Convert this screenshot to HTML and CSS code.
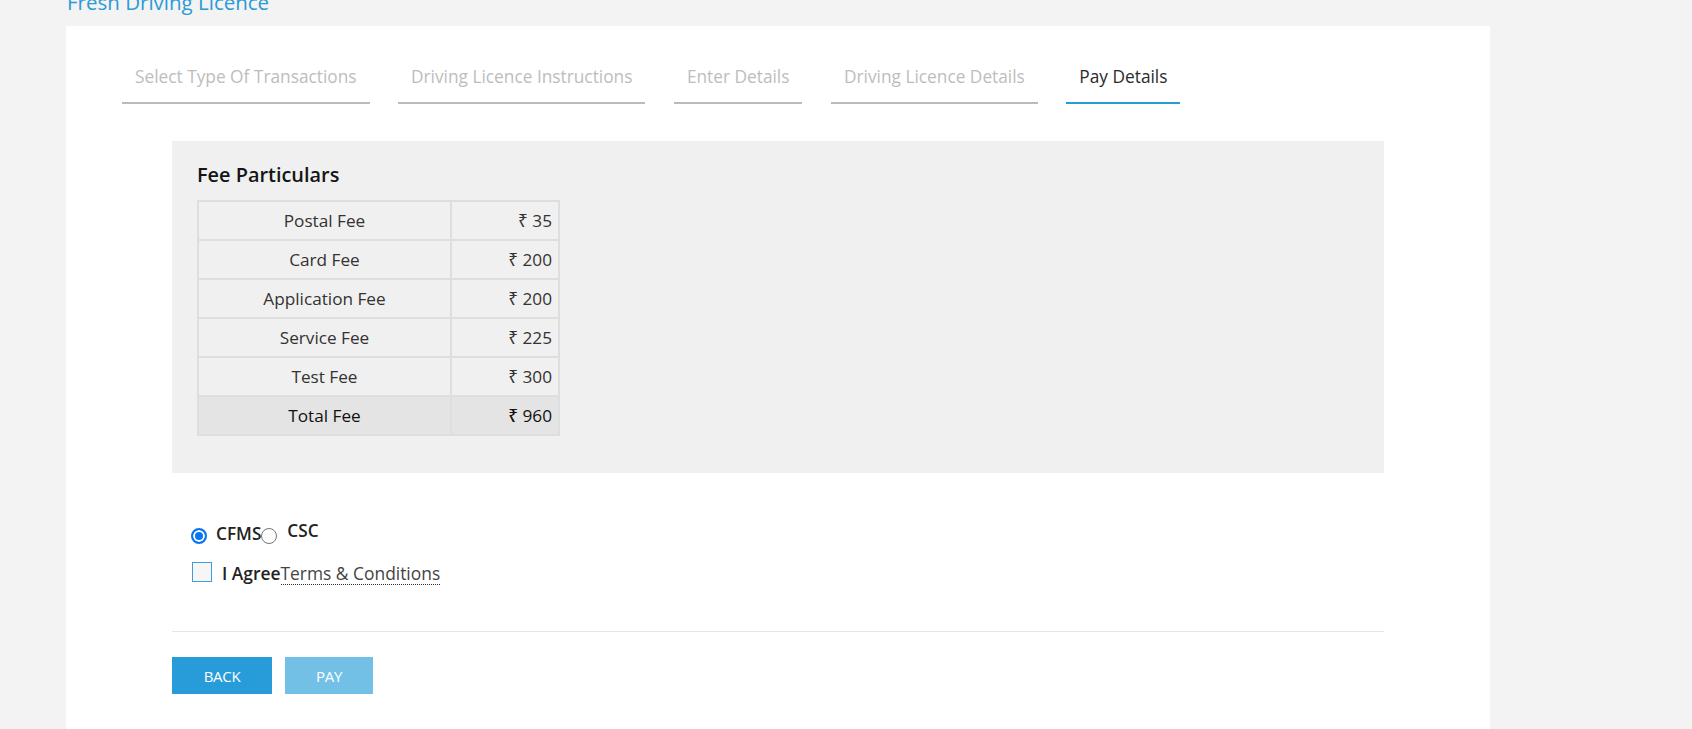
FILE: index.html
```html
<!DOCTYPE html>
<html lang="en">
<head>
<meta charset="utf-8">
<title>Fresh Driving Licence - Pay Details</title>
<link rel="stylesheet" href="styles.css">
</head>
<body>
<div class="page">
  <h2 class="title">Fresh Driving Licence</h2>
  <div class="card">
    <ul class="tabs">
      <li class="tab">Select Type Of Transactions</li>
      <li class="tab">Driving Licence Instructions</li>
      <li class="tab">Enter Details</li>
      <li class="tab">Driving Licence Details</li>
      <li class="tab active">Pay Details</li>
    </ul>

    <div class="fee-box">
      <h3 class="fee-title">Fee Particulars</h3>
      <table class="fee-table">
        <colgroup><col class="c1"><col class="c2"></colgroup>
        <tbody>
          <tr><td class="name">Postal Fee</td><td class="amt">₹ 35</td></tr>
          <tr><td class="name">Card Fee</td><td class="amt">₹ 200</td></tr>
          <tr><td class="name">Application Fee</td><td class="amt">₹ 200</td></tr>
          <tr><td class="name">Service Fee</td><td class="amt">₹ 225</td></tr>
          <tr><td class="name">Test Fee</td><td class="amt">₹ 300</td></tr>
          <tr class="total"><td class="name">Total Fee</td><td class="amt">₹ 960</td></tr>
        </tbody>
      </table>
    </div>

    <div class="options">
      <div class="radio-row">
        <span class="radio checked"></span>
        <span class="opt-label">CFMS</span>
        <span class="radio"></span>
        <span class="opt-label raised">CSC</span>
      </div>
      <div class="agree-row">
        <span class="checkbox"></span>
        <span class="agree">I Agree</span><span class="terms">Terms &amp; Conditions</span>
      </div>
    </div>

    <div class="divider"></div>

    <div class="actions">
      <button class="btn btn-back">BACK</button>
      <button class="btn btn-pay">PAY</button>
    </div>
  </div>
</div>
</body>
</html>
```

FILE: styles.css
```css
html, body {
  margin: 0;
  padding: 0;
  background: #f3f3f3;
  font-family: "Open Sans", "Noto Sans", sans-serif;
  color: #333;
  overflow: hidden;
}

.page {
  padding-left: 66px;
}

.title {
  margin: -11px 0 10px 1px;
  font-size: 20.5px;
  line-height: 27px;
  font-weight: 400;
  color: #2b9ad7;
}

.card {
  width: 1424px;
  min-height: 760px;
  background: #fff;
  padding-top: 39px;
  box-sizing: border-box;
}

.tabs {
  list-style: none;
  display: flex;
  gap: 28.5px;
  margin: 0 0 0 56px;
  padding: 0;
}

.tab {
  font-size: 17.3px;
  font-weight: 400;
  line-height: 24px;
  padding: 0 13px 13px;
  color: #bdbdbd;
  border-bottom: 2px solid #bbbbbb;
  white-space: nowrap;
}

.tab.active {
  color: #2a2a2a;
  border-bottom-color: #279cd9;
}

.fee-box {
  margin: 37px 106px 0;
  background: #f0f0f0;
  padding: 21px 25px 37px;
}

.fee-title {
  margin: 0 0 12px;
  font-size: 19.9px;
  line-height: 26px;
  font-weight: 600;
  color: #151515;
}

.fee-table {
  border-collapse: collapse;
  table-layout: fixed;
  width: 361px;
  font-size: 17.2px;
}

.fee-table col.c1 { width: 253px; }
.fee-table col.c2 { width: 108px; }

.fee-table td {
  border: 2px solid #dedede;
  height: 37px;
  padding: 0;
  line-height: 24px;
  color: #333;
}

.fee-table td.name {
  text-align: center;
}

.fee-table td.amt {
  text-align: right;
  padding-right: 6px;
}

.fee-table tr.total td {
  background: #e4e4e4;
  font-weight: 500;
  color: #111;
}

.options {
  margin: 49px 0 0 125px;
}

.radio-row {
  display: flex;
  align-items: center;
  height: 24px;
  font-size: 17.2px;
  line-height: 24px;
}

.radio {
  width: 14px;
  height: 14px;
  border: 1px solid #767676;
  border-radius: 50%;
  background: #fff;
  margin-top: 4px;
}

.radio.checked {
  width: 12px;
  height: 12px;
  border: 2px solid #0b74ef;
  background: #0b74ef;
  box-shadow: inset 0 0 0 2px #fff;
}

.opt-label {
  font-weight: 600;
  color: #222;
  margin-left: 9px;
}

.opt-label.raised {
  margin-left: 10px;
  padding-bottom: 6px;
}

.agree-row {
  display: flex;
  align-items: center;
  margin-top: 15px;
  height: 24px;
  font-size: 17.4px;
  line-height: 24px;
}

.checkbox {
  width: 18px;
  height: 18px;
  border: 1.5px solid #3d9fdb;
  background: #f6f6f6;
  margin-left: 1px;
  margin-top: -2px;
}

.agree {
  margin-left: 10px;
  font-weight: 600;
  color: #222;
}

.terms {
  color: #444;
  border-bottom: 1px dotted #333;
  line-height: 22px;
}

.divider {
  margin: 46px 106px 0;
  height: 1px;
  background: #e6e6e6;
}

.actions {
  display: flex;
  gap: 13px;
  margin: 25px 106px 0;
}

.btn {
  height: 37px;
  border: none;
  border-radius: 0;
  color: #fff;
  font-family: "Open Sans", "Noto Sans", sans-serif;
  font-size: 15px;
  letter-spacing: -0.3px;
  padding: 0;
  cursor: pointer;
}

.btn-back {
  width: 100px;
  background: #279cd9;
}

.btn-pay {
  width: 88px;
  background: #73c0e7;
}
```
